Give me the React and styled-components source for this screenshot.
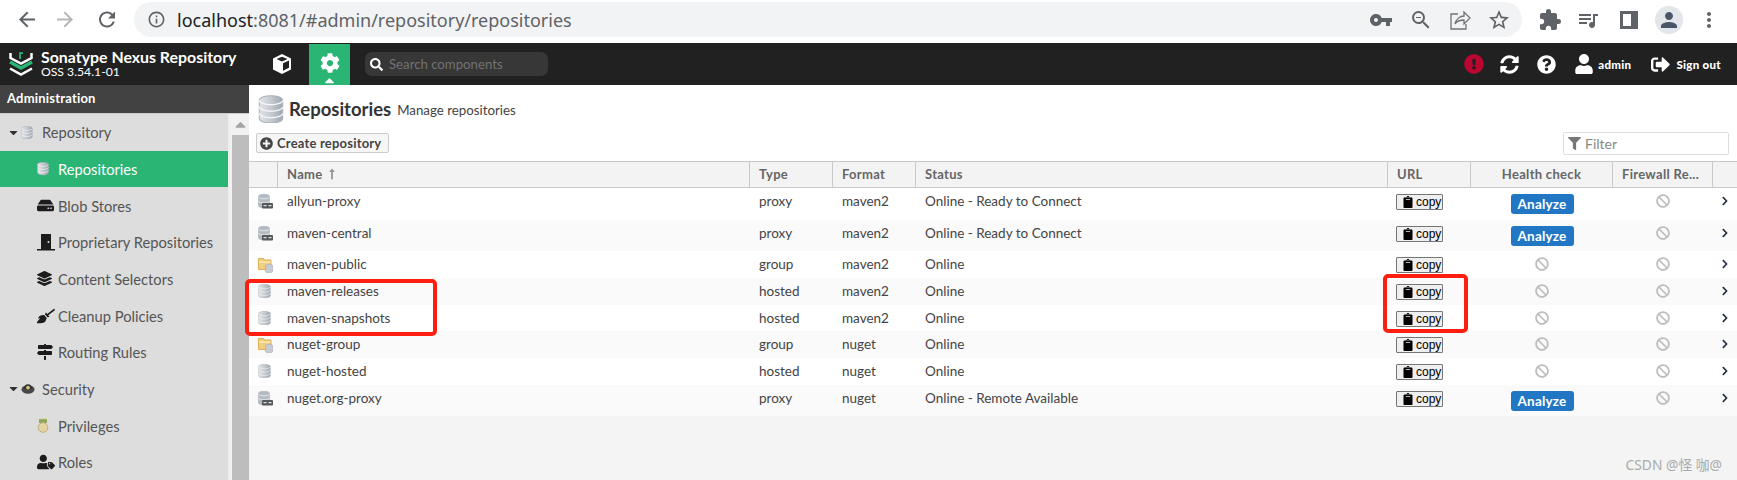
import styled, { createGlobalStyle } from "styled-components";
import {
  FaBan,
  FaBroom,
  FaCaretDown,
  FaCaretUp,
  FaChevronRight,
  FaClipboard,
  FaCog,
  FaExclamationCircle,
  FaFilter,
  FaHdd,
  FaLayerGroup,
  FaLongArrowAltUp,
  FaMapSigns,
  FaPlusCircle,
  FaQuestionCircle,
  FaSearch,
  FaSignOutAlt,
  FaSyncAlt,
  FaUser,
  FaUserTag,
} from "react-icons/fa";
import {
  MdArrowBack,
  MdArrowForward,
  MdExtension,
  MdInfoOutline,
  MdMoreVert,
  MdOutlineZoomOut,
  MdPerson,
  MdQueueMusic,
  MdRefresh,
  MdStarBorder,
  MdVpnKey,
} from "react-icons/md";

const GlobalStyle = createGlobalStyle`
  html, body {
    margin: 0;
    padding: 0;
    background: #f4f4f4;
    overflow: hidden;
  }
  * { box-sizing: border-box; }
`;

const GREEN = "#2ab574";
const COLUMNS = "29px 472px 83px 83px 472px 83px 142px 100px 1fr";

const Page = styled.div`
  position: relative;
  width: 1737px;
  height: 480px;
  overflow: hidden;
  display: flex;
  flex-direction: column;
  font-family: Lato, "Noto Sans", sans-serif;
`;

/* browser chrome */
const BrowserBar = styled.div`
  height: 43px;
  flex: none;
  background: #fff;
  display: flex;
  align-items: flex-start;
  padding: 2px 0 0 15px;
  color: #5f6368;
`;

const NavButton = styled.span`
  width: 24px;
  height: 35px;
  margin-right: ${({ $dim }) => ($dim ? "18px" : "14px")};
  display: flex;
  align-items: center;
  justify-content: center;
  font-size: 25px;
  color: ${({ $dim }) => ($dim ? "#b5b7ba" : "#5f6368")};
`;

const AddressPill = styled.div`
  width: 1388px;
  height: 35px;
  margin-left: 1px;
  border-radius: 18px;
  background: #f1f3f4;
  display: flex;
  align-items: center;
  padding-left: 13px;
  margin-right: 16px;
`;

const InfoIcon = styled(MdInfoOutline)`
  font-size: 19px;
  margin-right: 11px;
  flex: none;
`;

const UrlHost = styled.span`
  font: 18px "Noto Sans", sans-serif;
  color: #202124;
`;

const UrlPath = styled.span`
  font: 18px "Noto Sans", sans-serif;
  color: #5f6368;
`;

const PillActions = styled.div`
  margin-left: auto;
  display: flex;
  align-items: center;
  gap: 16px;
  padding-right: 11px;
  font-size: 24px;
`;

const BarIcons = styled.div`
  height: 35px;
  display: flex;
  align-items: center;
  gap: 14px;
  font-size: 24px;
`;

const PanelGlyph = styled.span`
  width: 18px;
  height: 18px;
  margin: 0 3px 0 6px;
  border: 3px solid #5f6368;
  border-right-width: 7px;
`;

const Avatar = styled.span`
  width: 28px;
  height: 28px;
  border-radius: 50%;
  background: #e3e6ea;
  color: #4b5568;
  font-size: 24px;
  display: flex;
  align-items: center;
  justify-content: center;
`;

/* nexus header */
const Header = styled.header`
  height: 42px;
  flex: none;
  background: #212121;
  color: #fff;
  display: flex;
  align-items: center;
  padding-left: 9px;
`;

const Brand = styled.div`
  width: 200px;
  margin-left: 8px;
  display: flex;
  flex-direction: column;
  line-height: 15px;
`;

const BrandName = styled.span`
  font-size: 15.9px;
  font-weight: 700;
`;

const BrandVersion = styled.span`
  font-size: 12.2px;
`;

const CubeSlot = styled.div`
  width: 55px;
  margin-left: 13px;
  display: flex;
  justify-content: center;
`;

const ActiveTab = styled.div`
  position: relative;
  width: 41px;
  height: 41px;
  margin-top: 1px;
  background: ${GREEN};
  display: flex;
  align-items: center;
  justify-content: center;
  font-size: 20px;
  padding-bottom: 3px;
`;

const TabCaret = styled(FaCaretUp)`
  position: absolute;
  bottom: -3px;
  left: 13px;
  font-size: 15px;
`;

const SearchBox = styled.div`
  width: 183px;
  height: 24px;
  margin-left: 15px;
  border-radius: 7px;
  background: #373737;
  display: flex;
  align-items: center;
  gap: 6px;
  padding-left: 5px;
  color: #fff;
  font-size: 13px;
`;

const SearchText = styled.span`
  font-size: 13.2px;
  color: #727272;
`;

const HeaderActions = styled.div`
  margin-left: auto;
  padding-right: 16px;
  display: flex;
  align-items: center;
`;

const HeaderIcon = styled.span`
  display: flex;
  font-size: 19px;
  margin-right: 18px;
`;

const AlertIcon = styled(HeaderIcon)`
  color: #bb0632;
  font-size: 20px;
  margin-right: 16px;
`;

const HeaderLabel = styled.span`
  font-size: 11.5px;
  font-weight: 900;
  letter-spacing: 0.3px;
`;

const UserIcon = styled(HeaderIcon)`
  margin-right: 4px;
  font-size: 20px;
`;

const SignOutIcon = styled(HeaderIcon)`
  margin: 0 6px 0 20px;
`;

/* body */
const Main = styled.div`
  flex: 1;
  min-height: 0;
  display: flex;
`;

const Sidebar = styled.aside`
  width: 249px;
  flex: none;
  display: flex;
  flex-direction: column;
  background: #ddd;
`;

const SidebarTitle = styled.div`
  height: 28px;
  flex: none;
  background: #424242;
  color: #fff;
  font-size: 13px;
  font-weight: 700;
  padding: 5px 7px 0;
  letter-spacing: 0.2px;
`;

const SidebarBody = styled.div`
  flex: 1;
  min-height: 0;
  display: flex;
  border-top: 1px solid #ccc;
`;

const Tree = styled.nav`
  width: 228px;
  flex: none;
`;

const TreeRow = styled.div`
  height: 36.67px;
  display: flex;
  align-items: center;
  padding-left: ${({ $child }) => ($child ? "37px" : "7px")};
  font-size: 14.7px;
  color: ${({ $active }) => ($active ? "#fff" : "#555")};
  background: ${({ $active }) => ($active ? GREEN : "transparent")};
`;

const TreeCaret = styled(FaCaretDown)`
  font-size: 13px;
  color: #333;
  margin-right: 1px;
`;

const TreeIcon = styled.span`
  width: 21px;
  flex: none;
  display: flex;
  font-size: ${({ $size }) => $size || 15}px;
  color: #1c1c1c;
`;

const GroupIcon = styled.span`
  width: 21px;
  flex: none;
  display: flex;
`;

const Scrollbar = styled.div`
  flex: 1;
  background: #f1f1f1;
  padding: 0 2px;
  border-left: 2px solid #eee;
`;

const ScrollUp = styled.div`
  height: 21px;
  display: flex;
  align-items: center;
  justify-content: center;
  color: #a3a3a3;
  font-size: 17px;
`;

const ScrollThumb = styled.div`
  height: 400px;
  background: #bdbdbd;
`;

const Content = styled.main`
  flex: 1;
  min-width: 0;
  display: flex;
  flex-direction: column;
  background: #f4f4f4;
`;

const TopArea = styled.div`
  height: 75.67px;
  flex: none;
  background: #fff;
  display: flex;
  flex-direction: column;
`;

const TitleRow = styled.div`
  height: 48px;
  display: flex;
  align-items: center;
  padding: 0 0 0 9px;
`;

const Title = styled.h1`
  margin: 0 6px 0 5px;
  font-size: 18.5px;
  font-weight: 700;
  color: #333;
`;

const Subtitle = styled.span`
  font-size: 13.3px;
  color: #444;
  padding-top: 2px;
`;

const ToolRow = styled.div`
  height: 27px;
  display: flex;
  align-items: flex-start;
  justify-content: space-between;
  padding: 0 8px 0 7px;
`;

const CreateButton = styled.button`
  width: 133px;
  height: 20px;
  margin: 0;
  padding: 0 0 0 3px;
  border: 1px solid #ccc;
  border-radius: 2px;
  background: #f6f6f6;
  display: flex;
  align-items: center;
  gap: 4px;
  font: 700 13px Lato, sans-serif;
  color: #444;
  letter-spacing: 0.2px;
`;

const CreateIcon = styled(FaPlusCircle)`
  font-size: 13px;
  color: #444;
`;

const FilterBox = styled.div`
  width: 166px;
  height: 23px;
  margin-top: -1px;
  border: 1px solid #ddd;
  border-radius: 2px;
  display: flex;
  align-items: center;
  padding-left: 4px;
  gap: 4px;
  font-size: 14px;
  color: #888;
`;

const FilterIcon = styled(FaFilter)`
  font-size: 13px;
  color: #777;
`;

const TableHead = styled.div`
  height: 27.33px;
  flex: none;
  display: grid;
  grid-template-columns: ${COLUMNS};
  background: #f3f3f3;
  border-top: 1px solid #c8c8c8;
  border-bottom: 1px solid #c8c8c8;
`;

const HeadCell = styled.div`
  display: flex;
  align-items: center;
  justify-content: ${({ $center }) => ($center ? "center" : "flex-start")};
  gap: 4px;
  padding-left: ${({ $center }) => ($center ? "0" : "9px")};
  border-right: 1px solid #c8c8c8;
  font-size: 13px;
  font-weight: 700;
  color: #666;
  letter-spacing: 0.3px;

  &:last-child {
    border-right: 0;
  }
`;

const SortArrow = styled(FaLongArrowAltUp)`
  font-size: 12px;
  color: #999;
`;

const Row = styled.div`
  height: ${({ $tall }) => ($tall ? "31.67px" : "26.67px")};
  display: grid;
  grid-template-columns: ${COLUMNS};
  background: ${({ $even }) => ($even ? "#fafafa" : "#fff")};
`;

const Cell = styled.div`
  padding: 5px 0 0 9px;
  font-size: 13.5px;
  line-height: 16px;
  color: #444;
  white-space: nowrap;
`;

const IconCell = styled.div`
  padding: 6px 0 0 9px;
  display: flex;
`;

const CenterCell = styled.div`
  display: flex;
  justify-content: center;
  padding-top: 6px;
`;

const ArrowCell = styled.div`
  padding: 8px 0 0 7px;
  font-size: 10px;
  color: #1f2b3a;
`;

const CopyButton = styled.button`
  width: 47px;
  height: 16px;
  margin: 6px 0 0 8px;
  padding: 0 0 0 5px;
  border: 1px solid #767676;
  border-radius: 1px;
  background: #efefef;
  display: flex;
  align-items: center;
  gap: 2px;
  font: 12px "Liberation Sans", sans-serif;
  color: #000;
`;

const ClipIcon = styled(FaClipboard)`
  font-size: 12px;
  flex: none;
`;

const AnalyzeButton = styled.button`
  width: 63px;
  height: 20px;
  margin: 0;
  padding: 0;
  border: 0;
  border-radius: 3px;
  background: #2277c4;
  color: #fff;
  font: 700 13.5px Lato, sans-serif;
  letter-spacing: 0.2px;
`;

const BanIcon = styled(FaBan)`
  font-size: 14px;
  color: #bdbdbd;
`;

const RedFrame = styled.div`
  position: absolute;
  left: ${({ $x }) => $x}px;
  top: ${({ $y }) => $y}px;
  width: ${({ $w }) => $w}px;
  height: ${({ $h }) => $h}px;
  border: 4.5px solid #ff1f10;
  border-radius: 5px;
`;

const Watermark = styled.span`
  position: absolute;
  right: 15px;
  bottom: 6px;
  font: 13.8px "Noto Sans", "Noto Sans CJK SC", sans-serif;
  color: #aaa;
`;

function DbIcon({ size = 15 }) {
  return (
    <svg width={size} height={size * 1.1} viewBox="0 0 20 22">
      <defs>
        <linearGradient id="silver" x1="0" x2="1" y1="0" y2="0">
          <stop offset="0" stopColor="#e2e5e8" />
          <stop offset="0.5" stopColor="#c5cad0" />
          <stop offset="1" stopColor="#9ea6ae" />
        </linearGradient>
      </defs>
      <path
        d="M1 4c0-2 4-3.500 9-3.500s9 1.500 9 3.500v14c0 2-4 3.500-9 3.500S1 20 1 18z"
        fill="url(#silver)"
        stroke="#a9b0b7"
        strokeWidth="0.8"
      />
      <path
        d="M1 4c0 2 4 3.500 9 3.500S19 6 19 4M1 9c0 2 4 3.500 9 3.500S19 11 19 9M1 14c0 2 4 3.500 9 3.500s9-1.500 9-3.500"
        fill="none"
        stroke="#f4f5f6"
        strokeWidth="1"
      />
    </svg>
  );
}

function ProxyIcon() {
  return (
    <svg width="15" height="15" viewBox="0 0 15 15">
      <path d="M0.500 2.500C.5 1 3 .3 6 .3s5.500.7 5.500 2.200V12c0 1-2.500 1.800-5.500 1.800S.5 13 .5 12z" fill="#b4bbc2" stroke="#9aa2aa" strokeWidth=".5" />
      <path d="M.5 3c0 1 2.500 1.800 5.500 1.800S11.500 4 11.500 3M.5 7c0 1 2.500 1.800 5.500 1.800s5.500-.8 5.500-1.800" fill="none" stroke="#eef0f1" strokeWidth=".8" />
      <rect x="4" y="9" width="11" height="5.500" rx="1" fill="#55595c" />
      <path d="M5.500 11.700h3M10.500 11.700h3" stroke="#e0e0e0" strokeWidth="1.200" />
    </svg>
  );
}

function FolderIcon() {
  return (
    <svg width="15" height="16" viewBox="0 0 15 16">
      <path d="M.5 1.500h5l1 1.500h6.500v9.500H.5z" fill="#f2cf7e" stroke="#d39f3e" strokeWidth=".8" />
      <path d="M1 5h11.500" stroke="#fff0c4" strokeWidth="1.200" />
      <path d="M7.500 8.500c0-.8 1.600-1.300 3.500-1.300s3.500.5 3.500 1.300v6c0 .8-1.600 1.300-3.500 1.300s-3.500-.5-3.500-1.300z" fill="#c6ccd2" stroke="#9ba3ab" strokeWidth=".5" />
    </svg>
  );
}

function HelmetIcon() {
  return (
    <svg width="14" height="13" viewBox="0 0 15 13">
      <ellipse cx="7.500" cy="7.500" rx="7" ry="4.500" fill="#484848" />
      <path d="M3 7c0-3 2-5 4.500-5S12 4 12 7z" fill="#333" />
      <circle cx="7.500" cy="5.500" r="2" fill="#d8c27a" />
    </svg>
  );
}

function MedalIcon() {
  return (
    <svg width="12" height="15" viewBox="0 0 12 15">
      <rect x="2" y="0" width="8" height="5" fill="#8ca65c" />
      <rect x="2" y="0" width="8" height="1.200" fill="#d6d9a8" />
      <circle cx="6" cy="9.500" r="4.800" fill="#e3d3a6" stroke="#c4ad6f" />
    </svg>
  );
}

function DoorIcon() {
  return (
    <svg width="18" height="18" viewBox="0 0 18 18">
      <path d="M4 1h10v15H4z" fill="#1c1c1c" />
      <path d="M0 16h18v1.500H0z" fill="#1c1c1c" />
      <circle cx="11.500" cy="9" r="1" fill="#ddd" />
    </svg>
  );
}

function CubeIcon() {
  return (
    <svg width="20" height="20" viewBox="0 0 20 20">
      <path d="M10 0 19 4.500v11L10 20 1 15.500v-11z" fill="#fff" />
      <path d="M10 2.800 15.500 5 10 7.400 4.500 5z" fill="#212121" />
      <path d="M11 9.200 17 6.600v7.200L11 16.800z" fill="#212121" />
    </svg>
  );
}

function LogoMark() {
  return (
    <svg width="24" height="24" viewBox="0 0 24 24" fill="none">
      <path d="M1.500 1v5L12 11.500 22.500 6V1" stroke="#fff" strokeWidth="2.500" />
      <path d="M1 10l11 6 11-6" stroke={GREEN} strokeWidth="3.500" />
      <path d="M1 16.500l11 6 11-6" stroke="#fff" strokeWidth="2.500" />
      <path d="M11 7V1.200h3" stroke={GREEN} strokeWidth="1.800" />
    </svg>
  );
}

function ShareIcon() {
  return (
    <svg width="22" height="22" viewBox="0 0 22 22" fill="none" stroke="#6f7377" strokeWidth="1.300">
      <path d="M9 5H2v15h15v-5" />
      <path d="M6 15c1-5 5-8 9-8V3l6 6-6 6v-4c-4 0-7 1-9 4z" />
    </svg>
  );
}

const repositories = [
  { name: "allyun-proxy", type: "proxy", format: "maven2", status: "Online - Ready to Connect", icon: "proxy", analyze: true },
  { name: "maven-central", type: "proxy", format: "maven2", status: "Online - Ready to Connect", icon: "proxy", analyze: true },
  { name: "maven-public", type: "group", format: "maven2", status: "Online", icon: "group" },
  { name: "maven-releases", type: "hosted", format: "maven2", status: "Online", icon: "hosted" },
  { name: "maven-snapshots", type: "hosted", format: "maven2", status: "Online", icon: "hosted" },
  { name: "nuget-group", type: "group", format: "nuget", status: "Online", icon: "group" },
  { name: "nuget-hosted", type: "hosted", format: "nuget", status: "Online", icon: "hosted" },
  { name: "nuget.org-proxy", type: "proxy", format: "nuget", status: "Online - Remote Available", icon: "proxy", analyze: true },
];

const repoIcons = {
  proxy: <ProxyIcon />,
  group: <FolderIcon />,
  hosted: <DbIcon size={13} />,
};

export default function App() {
  return (
    <Page>
      <GlobalStyle />
      <BrowserBar>
        <NavButton><MdArrowBack /></NavButton>
        <NavButton $dim><MdArrowForward /></NavButton>
        <NavButton><MdRefresh /></NavButton>
        <AddressPill>
          <InfoIcon />
          <UrlHost>localhost</UrlHost>
          <UrlPath>:8081/#admin/repository/repositories</UrlPath>
          <PillActions>
            <MdVpnKey />
            <MdOutlineZoomOut />
            <ShareIcon />
            <MdStarBorder />
          </PillActions>
        </AddressPill>
        <BarIcons>
          <MdExtension />
          <MdQueueMusic />
          <PanelGlyph />
          <Avatar><MdPerson /></Avatar>
          <MdMoreVert />
        </BarIcons>
      </BrowserBar>

      <Header>
        <LogoMark />
        <Brand>
          <BrandName>Sonatype Nexus Repository</BrandName>
          <BrandVersion>OSS 3.54.1-01</BrandVersion>
        </Brand>
        <CubeSlot><CubeIcon /></CubeSlot>
        <ActiveTab>
          <FaCog />
          <TabCaret />
        </ActiveTab>
        <SearchBox>
          <FaSearch />
          <SearchText>Search components</SearchText>
        </SearchBox>
        <HeaderActions>
          <AlertIcon><FaExclamationCircle /></AlertIcon>
          <HeaderIcon><FaSyncAlt /></HeaderIcon>
          <HeaderIcon><FaQuestionCircle /></HeaderIcon>
          <UserIcon><FaUser /></UserIcon>
          <HeaderLabel>admin</HeaderLabel>
          <SignOutIcon><FaSignOutAlt /></SignOutIcon>
          <HeaderLabel>Sign out</HeaderLabel>
        </HeaderActions>
      </Header>

      <Main>
        <Sidebar>
          <SidebarTitle>Administration</SidebarTitle>
          <SidebarBody>
            <Tree>
              <TreeRow>
                <TreeCaret />
                <GroupIcon><DbIcon size={12} /></GroupIcon>
                Repository
              </TreeRow>
              <TreeRow $child $active>
                <GroupIcon><DbIcon size={12} /></GroupIcon>
                Repositories
              </TreeRow>
              <TreeRow $child><TreeIcon $size={17}><FaHdd /></TreeIcon>Blob Stores</TreeRow>
              <TreeRow $child><TreeIcon><DoorIcon /></TreeIcon>Proprietary Repositories</TreeRow>
              <TreeRow $child><TreeIcon><FaLayerGroup /></TreeIcon>Content Selectors</TreeRow>
              <TreeRow $child><TreeIcon $size={18}><FaBroom /></TreeIcon>Cleanup Policies</TreeRow>
              <TreeRow $child><TreeIcon $size={16}><FaMapSigns /></TreeIcon>Routing Rules</TreeRow>
              <TreeRow>
                <TreeCaret />
                <GroupIcon><HelmetIcon /></GroupIcon>
                Security
              </TreeRow>
              <TreeRow $child><GroupIcon><MedalIcon /></GroupIcon>Privileges</TreeRow>
              <TreeRow $child><TreeIcon $size={18}><FaUserTag /></TreeIcon>Roles</TreeRow>
            </Tree>
            <Scrollbar>
              <ScrollUp><FaCaretUp /></ScrollUp>
              <ScrollThumb />
            </Scrollbar>
          </SidebarBody>
        </Sidebar>

        <Content>
          <TopArea>
            <TitleRow>
              <DbIcon size={26} />
              <Title>Repositories</Title>
              <Subtitle>Manage repositories</Subtitle>
            </TitleRow>
            <ToolRow>
              <CreateButton><CreateIcon />Create repository</CreateButton>
              <FilterBox><FilterIcon />Filter</FilterBox>
            </ToolRow>
          </TopArea>

          <TableHead>
            <HeadCell />
            <HeadCell>Name <SortArrow /></HeadCell>
            <HeadCell>Type</HeadCell>
            <HeadCell>Format</HeadCell>
            <HeadCell>Status</HeadCell>
            <HeadCell>URL</HeadCell>
            <HeadCell $center>Health check</HeadCell>
            <HeadCell>Firewall Re...</HeadCell>
            <HeadCell />
          </TableHead>

          {repositories.map((repo, i) => (
            <Row key={repo.name} $even={i % 2 === 1} $tall={repo.analyze}>
              <IconCell>{repoIcons[repo.icon]}</IconCell>
              <Cell>{repo.name}</Cell>
              <Cell>{repo.type}</Cell>
              <Cell>{repo.format}</Cell>
              <Cell>{repo.status}</Cell>
              <div>
                <CopyButton><ClipIcon />copy</CopyButton>
              </div>
              <CenterCell>
                {repo.analyze ? <AnalyzeButton>Analyze</AnalyzeButton> : <BanIcon />}
              </CenterCell>
              <CenterCell><BanIcon /></CenterCell>
              <ArrowCell><FaChevronRight /></ArrowCell>
            </Row>
          ))}
        </Content>
      </Main>

      <RedFrame $x={245} $y={279} $w={192} $h={57} />
      <RedFrame $x={1383} $y={274} $w={85} $h={59} />
      <Watermark>CSDN @怪 咖@</Watermark>
    </Page>
  );
}
